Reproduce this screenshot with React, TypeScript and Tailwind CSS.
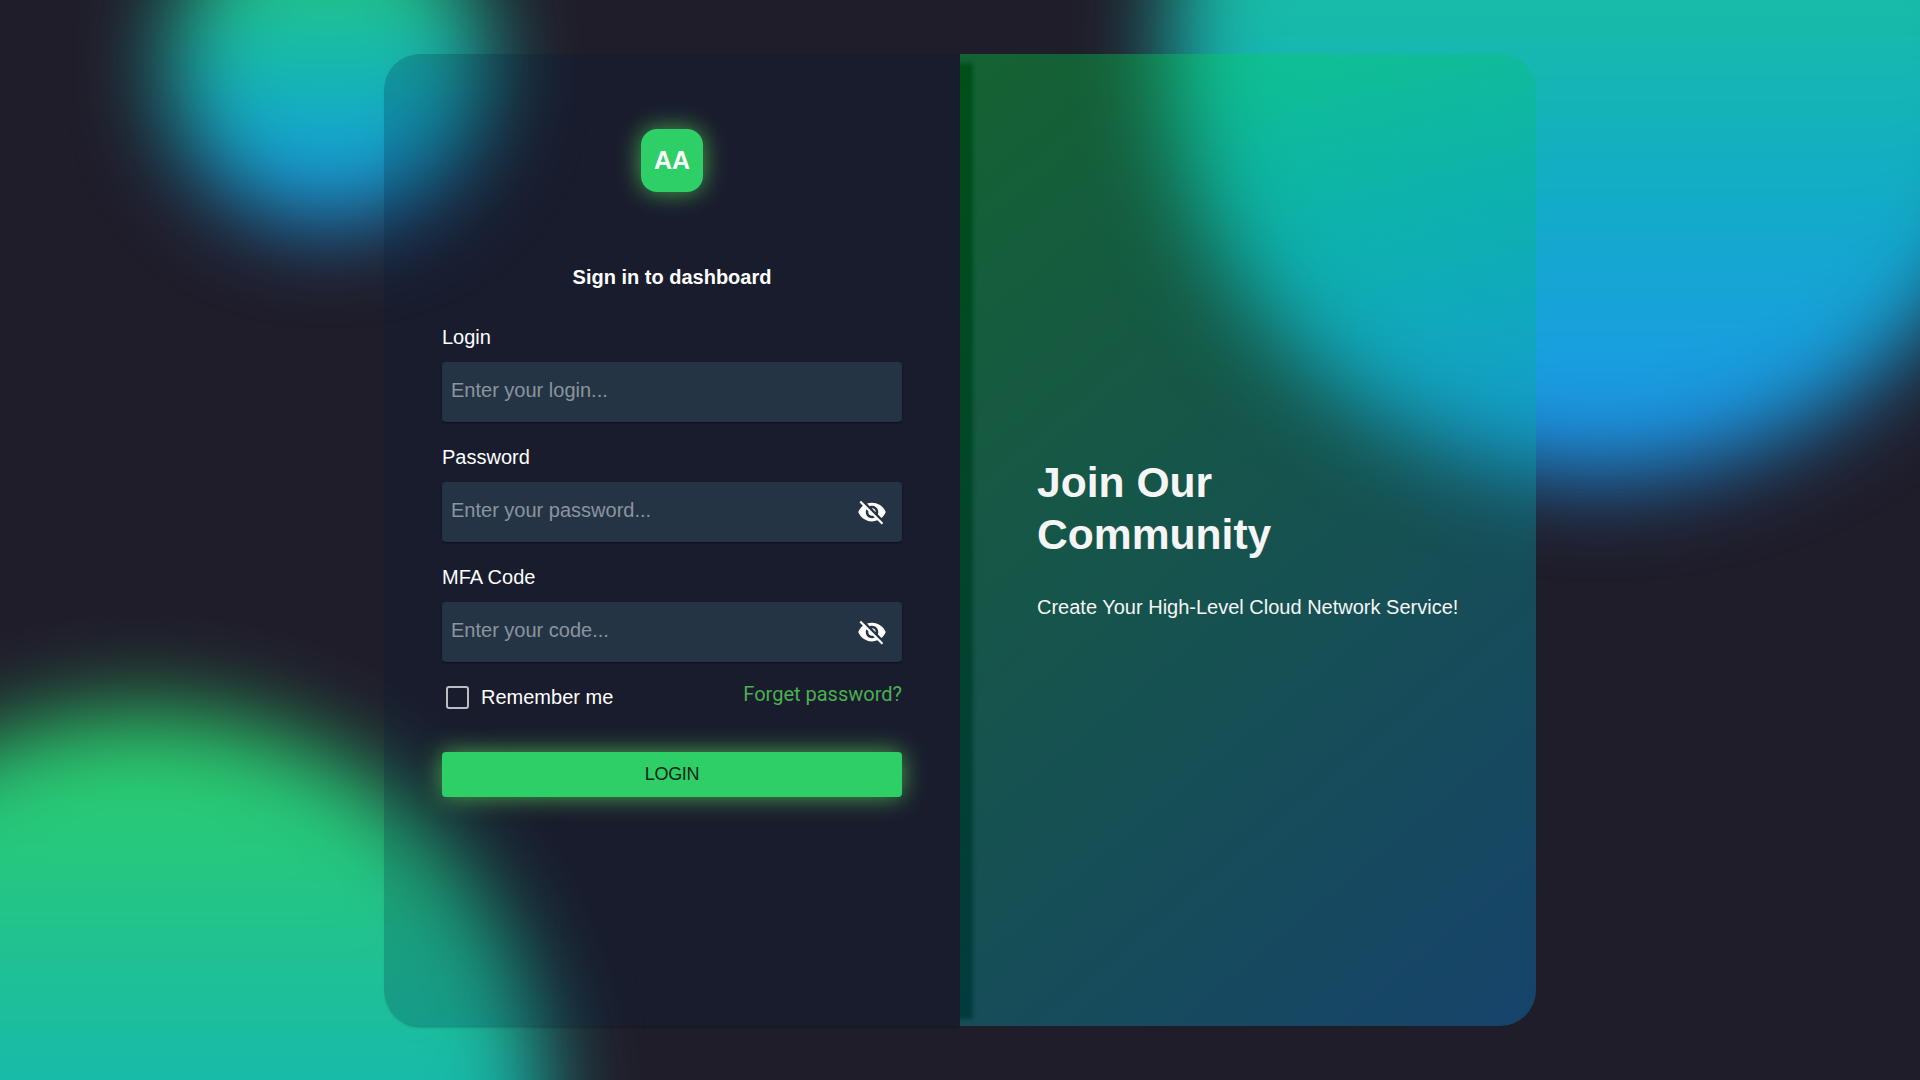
import React from "react";

const arial = "font-['Liberation_Sans',Arial,sans-serif]";
const orb =
  "absolute rounded-full bg-[linear-gradient(#2ecf66,#16b8ae_50%,#12acc6_67%,#17a2da_82%,#1f90ec)]";

function EyeOff() {
  return (
    <svg viewBox="0 0 24 24" className="mr-[15px] size-[30px] shrink-0 fill-white">
      <path d="M12 7c2.76 0 5 2.24 5 5 0 .65-.13 1.26-.36 1.83l2.92 2.92c1.51-1.26 2.7-2.89 3.43-4.75-1.73-4.39-6-7.5-11-7.5-1.4 0-2.74.25-3.98.7l2.16 2.16C10.74 7.13 11.35 7 12 7zM2 4.27l2.28 2.28.46.46C3.08 8.3 1.78 10.02 1 12c1.73 4.39 6 7.5 11 7.5 1.55 0 3.03-.3 4.38-.84l.42.42L19.73 22 21 20.73 3.27 3 2 4.27zM7.53 9.8l1.55 1.55c-.05.21-.08.43-.08.65 0 1.66 1.34 3 3 3 .22 0 .44-.03.65-.08l1.55 1.55c-.67.33-1.41.53-2.2.53-2.76 0-5-2.24-5-5 0-.79.2-1.53.53-2.2zm4.31-.78l3.15 3.15.02-.16c0-1.66-1.34-3-3-3l-.17.01z" />
    </svg>
  );
}

function Field({ label, placeholder, secret }: { label: string; placeholder: string; secret?: boolean }) {
  return (
    <div className="mb-[22px] flex flex-col">
      <label className="mb-3 h-[26px] text-xl leading-[26px] text-white">{label}</label>
      <div className="flex h-[60px] items-center rounded-[4px] bg-[#243445] shadow-[0_1px_2px_rgba(0,0,0,0.5)]">
        <input
          className="h-full min-w-0 flex-1 bg-transparent px-[9px] pb-1 text-xl text-white outline-none placeholder:text-[#8b949e]"
          placeholder={placeholder}
          type={secret ? "password" : "text"}
        />
        {secret && <EyeOff />}
      </div>
    </div>
  );
}

export default function App() {
  return (
    <div className={`relative flex h-screen w-full items-center justify-center overflow-hidden bg-[#201d2a] ${arial}`}>
      <div className={`${orb} left-[167px] top-[-98px] size-[322px] blur-[45px]`} />
      <div className={`${orb} left-[1168px] top-[-388px] size-[864px] blur-[45px]`} />
      <div className={`${orb} left-[-260px] top-[711px] size-[806px] blur-[45px]`} />

      <main className="relative flex h-[972px] w-[1152px]">
        <section className="flex w-1/2 flex-col rounded-l-[36px] bg-[rgba(2,24,62,0.2)] px-[58px] pt-[75px] shadow-[0_3px_3px_-2px_rgba(0,0,0,0.3)]">
          <div className="flex h-[63px] w-[62px] items-center justify-center self-center rounded-[16px] bg-[#2ecf66] text-[25px] font-bold text-white shadow-[0_0_25px_rgba(76,175,80,0.95)]">
            AA
          </div>
          <h1 className="mt-[71px] mb-[33px] text-center text-xl leading-[28px] font-bold text-white">
            Sign in to dashboard
          </h1>
          <Field label="Login" placeholder="Enter your login..." />
          <Field label="Password" placeholder="Enter your password..." secret />
          <Field label="MFA Code" placeholder="Enter your code..." secret />
          <div className="flex h-[26px] items-center justify-between">
            <label className="flex items-center text-xl text-white">
              <span className="mr-3 ml-1 size-[23px] rounded-[3px] border-2 border-[#bcbcc4]" />
              Remember me
            </label>
            <a className="mb-[6px] font-[Roboto,sans-serif] text-xl text-[#4caf50]">Forget password?</a>
          </div>
          <button className="mt-[42px] h-[45px] rounded-[4px] bg-[#2ecf66] pb-[2px] text-lg tracking-[-0.3px] text-[#12251b] shadow-[0_0_25px_rgba(76,175,80,0.95)]">
            LOGIN
          </button>
        </section>
        <section className="relative flex w-1/2 flex-col justify-center overflow-hidden rounded-r-[36px] px-[77px] pb-[3px]">
          <div className="absolute top-[9px] bottom-[7px] left-[-10px] w-[23px] bg-black blur-[2px]" />
          <div className="absolute inset-0 bg-[linear-gradient(140deg,rgba(2,222,64,0.36),rgba(6,134,222,0.36))]" />
          <h2 className="relative w-[300px] text-[42.6px] leading-[52px] font-bold text-[#f5f5f5]">
            Join Our Community
          </h2>
          <p className="relative mt-[33px] text-xl text-[#f5f5f5]">Create Your High-Level Cloud Network Service!</p>
        </section>
      </main>
    </div>
  );
}
